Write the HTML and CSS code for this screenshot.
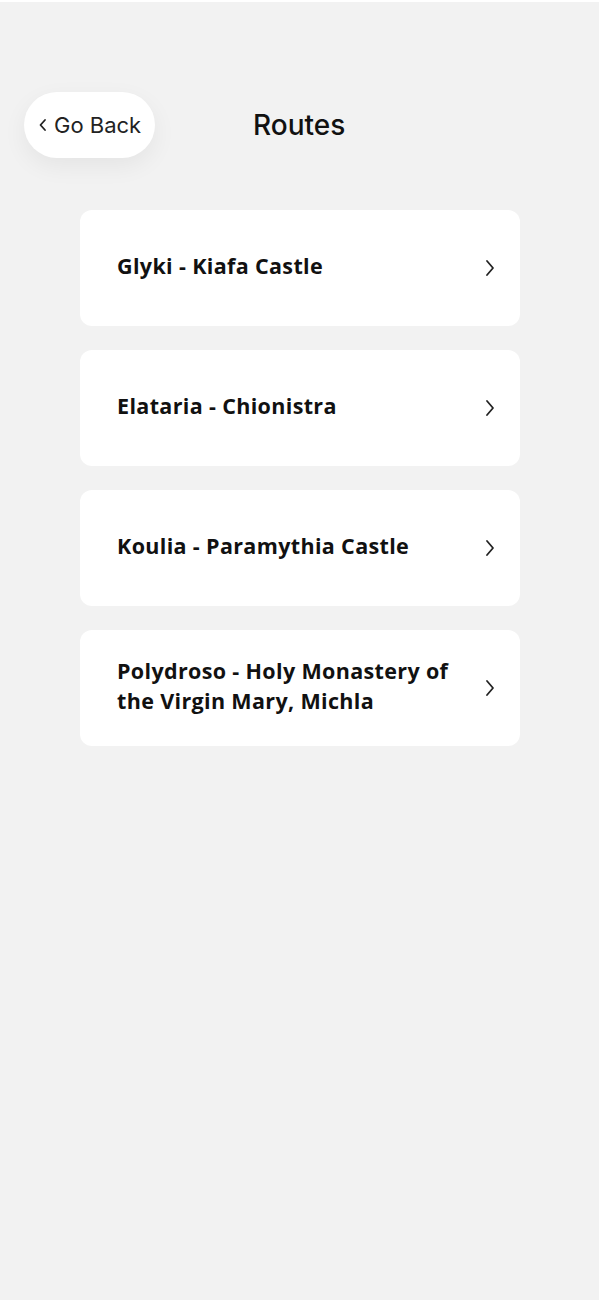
FILE: index.html
```html
<!DOCTYPE html>
<html lang="en">
<head>
    <meta charset="UTF-8">
    <meta name="viewport" content="width=device-width, initial-scale=1.0">
    <title>Routes</title>
    <link rel="stylesheet" href="styles.css">
</head>
<body>

<div class="screen">
    <header class="top-bar">
        <button class="back-btn">
            <svg width="10" height="16" viewBox="0 0 10 16"><path d="M7 3 L2.5 8 L7 13" fill="none" stroke="#222" stroke-width="1.8" stroke-linecap="round" stroke-linejoin="round"/></svg>
            <span>Go Back</span>
        </button>
        <h1>Routes</h1>
    </header>

    <ul class="routes">
        <li class="route">
            <span class="route-name">Glyki - Kiafa Castle</span>
            <svg class="chevron" width="12" height="20" viewBox="0 0 12 20"><path d="M3 3 L9 10 L3 17" fill="none" stroke="#222" stroke-width="1.8" stroke-linecap="round" stroke-linejoin="round"/></svg>
        </li>
        <li class="route">
            <span class="route-name">Elataria - Chionistra</span>
            <svg class="chevron" width="12" height="20" viewBox="0 0 12 20"><path d="M3 3 L9 10 L3 17" fill="none" stroke="#222" stroke-width="1.8" stroke-linecap="round" stroke-linejoin="round"/></svg>
        </li>
        <li class="route">
            <span class="route-name">Koulia - Paramythia Castle</span>
            <svg class="chevron" width="12" height="20" viewBox="0 0 12 20"><path d="M3 3 L9 10 L3 17" fill="none" stroke="#222" stroke-width="1.8" stroke-linecap="round" stroke-linejoin="round"/></svg>
        </li>
        <li class="route">
            <span class="route-name">Polydroso - Holy Monastery of the Virgin Mary, Michla</span>
            <svg class="chevron" width="12" height="20" viewBox="0 0 12 20"><path d="M3 3 L9 10 L3 17" fill="none" stroke="#222" stroke-width="1.8" stroke-linecap="round" stroke-linejoin="round"/></svg>
        </li>
    </ul>
</div>

</body>
</html>
```

FILE: styles.css
```css
* {
    margin: 0;
    padding: 0;
    box-sizing: border-box;
}

body {
    font-family: 'Open Sans', sans-serif;
    background-color: #f2f2f2;
    color: #111;
    border-top: 2px solid #fff;
}

.screen {
    min-height: 1298px;
    padding-top: 90px;
}

.top-bar {
    display: flex;
    align-items: center;
    height: 66px;
    padding-left: 24px;
}

.back-btn {
    display: flex;
    align-items: center;
    gap: 6px;
    width: 131px;
    height: 66px;
    padding-left: 14px;
    border: none;
    border-radius: 33px;
    background-color: #fff;
    box-shadow: 0 8px 24px rgba(0, 0, 0, 0.06);
    font-family: 'Inter', sans-serif;
    font-size: 22px;
    font-weight: 400;
    color: #222;
}

h1 {
    margin-left: 98px;
    font-family: 'Inter', sans-serif;
    font-size: 28px;
    font-weight: 500;
    color: #111;
}

.routes {
    list-style: none;
    display: flex;
    flex-direction: column;
    gap: 24px;
    width: 440px;
    margin: 52px auto 0 80px;
}

.route {
    display: flex;
    align-items: center;
    justify-content: space-between;
    height: 116px;
    padding: 0 24px 5px 37px;
    border-radius: 12px;
    background-color: #fff;
}

.route-name {
    max-width: 345px;
    font-size: 21.5px;
    font-weight: 700;
    letter-spacing: 0.35px;
    line-height: 30px;
    color: #111;
}

.chevron {
    flex-shrink: 0;
    margin-top: 5px;
}
```
